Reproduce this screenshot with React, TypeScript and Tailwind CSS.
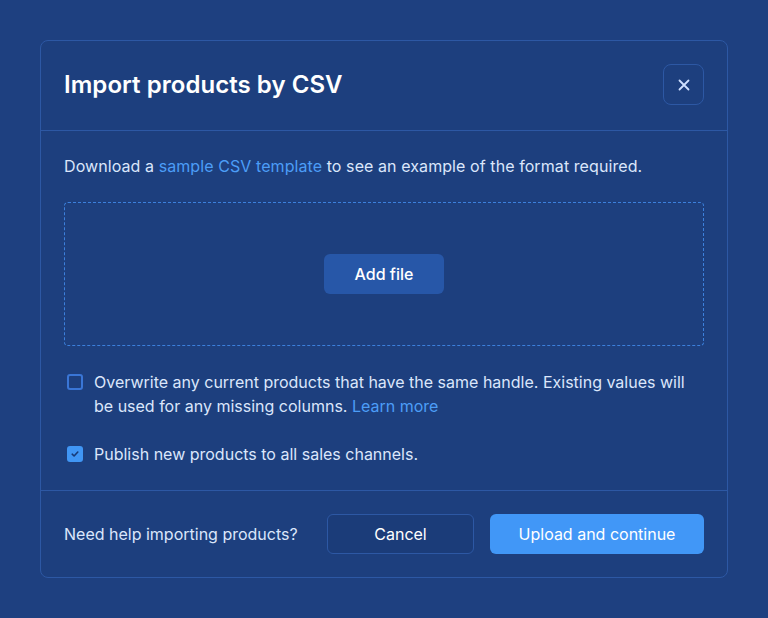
import React from "react";

export default function App() {
  return (
    <div
      className="w-[768px] h-[618px] bg-[#1e4080] pt-[40px] pl-[40px]"
      style={{ fontFamily: "Inter, 'Noto Sans', sans-serif" }}
    >
      <div className="w-[688px] rounded-[8px] border border-[#2d58a4] bg-[#1d3f7e] flex flex-col">
        <div className="flex items-center justify-between px-[23px] pt-[23px] pb-[25px] border-b border-[#2d58a4]">
          <h1 className="text-[24px] font-semibold text-white leading-[32px] tracking-[0.05px]">
            Import products by CSV
          </h1>
          <button className="w-[41px] h-[41px] rounded-[8px] border border-[#2d58a4] flex items-center justify-center text-[#cfe0ff]">
            <svg width="14" height="14" viewBox="0 0 14 14" fill="none">
              <path d="M2.5 2.5l9 9M11.5 2.5l-9 9" stroke="currentColor" strokeWidth="1.8" strokeLinecap="round" />
            </svg>
          </button>
        </div>
        <div className="px-[23px] pt-[23px] pb-[24px] flex flex-col border-b border-[#2d58a4] text-[16px] leading-[24px] text-[#dbe6fb]">
          <p className="tracking-[0.08px]">
            Download a <span className="text-[#4c9df7]">sample CSV template</span> to see an example of the format required.
          </p>
          <div className="mt-[24px] h-[144px] rounded-[4px] border border-dashed border-[#3c80dc] flex items-center justify-center">
            <button className="w-[120px] h-[40px] rounded-[6px] bg-[#2757a8] text-white text-[16px] font-medium">
              Add file
            </button>
          </div>
          <div className="mt-[24px] flex items-start gap-[11px]">
            <div className="mt-[4px] ml-[3px] w-[16px] h-[16px] rounded-[3px] border-2 border-[#3a76d6] shrink-0" />
            <p>
              Overwrite any current products that have the same handle. Existing values will be used for any missing columns.{" "}
              <a className="text-[#4c9df7]">Learn more</a>
            </p>
          </div>
          <div className="mt-[24px] flex items-start gap-[11px]">
            <div className="mt-[4px] ml-[3px] w-[16px] h-[16px] rounded-[3px] bg-[#4096f5] shrink-0 flex items-center justify-center">
              <svg width="10" height="10" viewBox="0 0 10 10" fill="none">
                <path d="M2.2 5.2l1.9 1.8L7.8 3" stroke="#173a78" strokeWidth="1.6" strokeLinecap="round" strokeLinejoin="round" />
              </svg>
            </div>
            <p>Publish new products to all sales channels.</p>
          </div>
        </div>
        <div className="flex items-center px-[23px] py-[23px]">
          <span className="text-[16px] leading-[24px] text-[#dbe6fb]">Need help importing products?</span>
          <button className="ml-auto w-[147px] h-[40px] rounded-[6px] border border-[#2d58a4] bg-[#1b3c79] text-white text-[16px] font-normal">
            Cancel
          </button>
          <button className="ml-[16px] w-[214px] h-[40px] rounded-[6px] bg-[#4197f7] text-white text-[16px] font-normal">
            Upload and continue
          </button>
        </div>
      </div>
    </div>
  );
}
